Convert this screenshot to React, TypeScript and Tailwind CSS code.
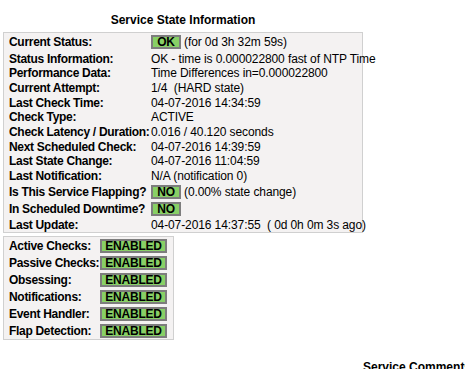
const rows: { label: string; value: string; h: string; badge?: string }[] = [
  { label: 'Current Status:', value: '(for 0d 3h 32m 59s)', h: 'h-[18px]', badge: 'OK' },
  { label: 'Status Information:', value: 'OK - time is 0.000022800 fast of NTP Time', h: 'h-[15px]' },
  { label: 'Performance Data:', value: 'Time Differences in=0.000022800', h: 'h-[14px]' },
  { label: 'Current Attempt:', value: '1/4  (HARD state)', h: 'h-[15px]' },
  { label: 'Last Check Time:', value: '04-07-2016 14:34:59', h: 'h-[15px]' },
  { label: 'Check Type:', value: 'ACTIVE', h: 'h-[14px]' },
  { label: 'Check Latency / Duration:', value: '0.016 / 40.120 seconds', h: 'h-[15px]' },
  { label: 'Next Scheduled Check:', value: '04-07-2016 14:39:59', h: 'h-[15px]' },
  { label: 'Last State Change:', value: '04-07-2016 11:04:59', h: 'h-[14px]' },
  { label: 'Last Notification:', value: 'N/A (notification 0)', h: 'h-[15px]' },
  { label: 'Is This Service Flapping?', value: '(0.00% state change)', h: 'h-[17px]', badge: 'NO' },
  { label: 'In Scheduled Downtime?', value: '', h: 'h-[18px]', badge: 'NO' },
  { label: 'Last Update:', value: '04-07-2016 14:37:55  ( 0d 0h 0m 3s ago)', h: 'h-[14px]' },
]

const checks = ['Active Checks:', 'Passive Checks:', 'Obsessing:', 'Notifications:', 'Event Handler:', 'Flap Detection:']

function Badge({ text, w }: { text: string; w: string }) {
  return (
    <span className={`flex h-[14px] ${w} shrink-0 items-center justify-center border-2 border-[#7d7d7d] bg-[#88d066] font-bold leading-none tracking-[-0.2px] text-black`}>
      {text}
    </span>
  )
}

export default function App() {
  return (
    <div className="h-[369px] w-[465px] overflow-hidden bg-white font-['Liberation_Sans',Arial,sans-serif] text-[12px] leading-[14px] text-black">
      <div className="w-[363px] pl-[3px] pt-[13px]">
        <div className="h-[14px] text-center font-bold">Service State Information</div>
        <div className="mt-[5px] flex flex-col border border-[#d0d0d0] bg-[#f4f2f2]">
          {rows.map((r) => (
            <div key={r.label} className={`flex ${r.h} items-center whitespace-pre`}>
              <div className="w-[147px] shrink-0 pl-[5px] font-bold tracking-[-0.3px]">{r.label}</div>
              <div className="flex items-center gap-[3px]">
                {r.badge && <Badge text={r.badge} w="w-[30px]" />}
                {r.value && <span className="tracking-[-0.1px]">{r.value}</span>}
              </div>
            </div>
          ))}
        </div>
      </div>
      <div className="ml-[3px] mt-[3px] flex w-[171px] flex-col border border-[#d0d0d0] bg-[#f4f2f2]">
        {checks.map((c) => (
          <div key={c} className="flex h-[17px] items-center">
            <div className="w-[96px] shrink-0 whitespace-nowrap pl-[5px] font-bold tracking-[-0.3px]">{c}</div>
            <Badge text="ENABLED" w="w-[67px]" />
          </div>
        ))}
      </div>
      <div className="ml-[363px] mt-[20px] whitespace-nowrap font-bold">Service Comments</div>
    </div>
  )
}
